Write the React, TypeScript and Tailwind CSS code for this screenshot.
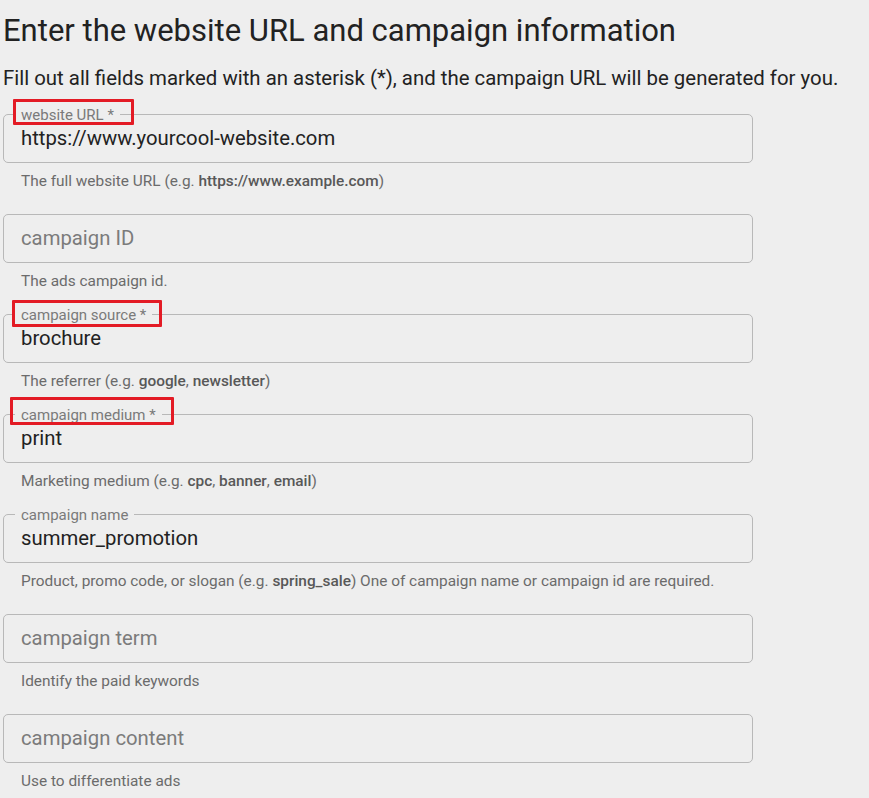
import type { ReactNode } from 'react';

type Field = {
  label: string;
  value?: string;
  helper: ReactNode;
  mark?: { left: number; top: number; width: number; height: number };
};

const B = ({ children }: { children: ReactNode }) => (
  <span className="font-medium text-[#585858]">{children}</span>
);

const FIELDS: Field[] = [
  {
    label: 'website URL *',
    value: 'https://www.yourcool-website.com',
    helper: (
      <>
        The full website URL (e.g. <B>https://www.example.com</B>)
      </>
    ),
    mark: { left: 9, top: -16, width: 121, height: 26 },
  },
  { label: 'campaign ID', helper: 'The ads campaign id.' },
  {
    label: 'campaign source *',
    value: 'brochure',
    helper: (
      <>
        The referrer (e.g. <B>google</B>, <B>newsletter</B>)
      </>
    ),
    mark: { left: 8, top: -15, width: 150, height: 27 },
  },
  {
    label: 'campaign medium *',
    value: 'print',
    helper: (
      <>
        Marketing medium (e.g. <B>cpc</B>, <B>banner</B>, <B>email</B>)
      </>
    ),
    mark: { left: 6, top: -18, width: 164, height: 28 },
  },
  {
    label: 'campaign name',
    value: 'summer_promotion',
    helper: (
      <>
        Product, promo code, or slogan (e.g. <B>spring_sale</B>) One of campaign name or campaign id are
        required.
      </>
    ),
  },
  { label: 'campaign term', helper: 'Identify the paid keywords' },
  { label: 'campaign content', helper: 'Use to differentiate ads' },
];

function OutlinedField({ field }: { field: Field }) {
  const filled = !!field.value;
  return (
    <div className="flex flex-col">
      <div className="relative w-[750px] h-[49px] rounded-[5px] border border-[#b8b8b8] flex items-center px-[17px]">
        {filled ? (
          <>
            <span className="absolute left-[11px] top-[-9px] px-[6px] bg-[#eeeeee] text-[15px] leading-[18px] text-[#7a7a7a]">
              {field.label}
            </span>
            <span className="text-[20.3px] text-[#222]">{field.value}</span>
          </>
        ) : (
          <span className="text-[20.3px] text-[#7b7b7b]">{field.label}</span>
        )}
        {field.mark && (
          <div
            className="absolute border-[3px] border-[#e31b25] rounded-[1px] pointer-events-none"
            style={{
              left: field.mark.left,
              top: field.mark.top,
              width: field.mark.width,
              height: field.mark.height,
            }}
          />
        )}
      </div>
      <p className="mt-[6px] pl-[18px] text-[15.4px] leading-[24px] text-[#6b6b6b]">{field.helper}</p>
    </div>
  );
}

export default function App() {
  return (
    <div
      className="min-h-screen bg-[#eeeeee] px-[3px] pt-[12px] text-[#222]"
      style={{ fontFamily: 'Roboto, "Noto Sans", Arial, sans-serif' }}
    >
      <h1 className="text-[31px] leading-[37px] font-normal">Enter the website URL and campaign information</h1>
      <p className="mt-[14px] text-[20.4px] leading-[30px]">
        Fill out all fields marked with an asterisk (*), and the campaign URL will be generated for you.
      </p>
      <div className="mt-[21px] flex flex-col gap-[21px]">
        {FIELDS.map((f) => (
          <OutlinedField key={f.label} field={f} />
        ))}
      </div>
    </div>
  );
}
